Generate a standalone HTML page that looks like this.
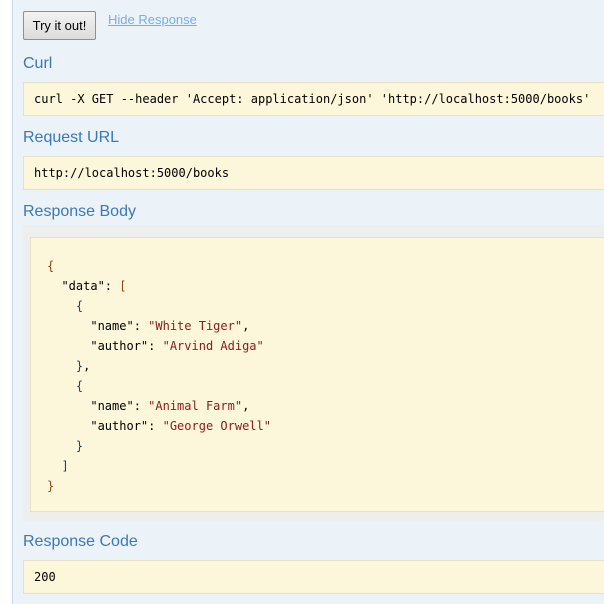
<!DOCTYPE html>
<html><head><meta charset="utf-8"><style>
html,body{margin:0;padding:0;width:604px;height:604px;overflow:hidden;background:#fff;font-family:"Liberation Sans",sans-serif}
.wrap{position:absolute;left:12px;top:0;width:592px;height:604px;background:#ebf3f9;border-left:1px solid #c5dbed}
.btn{position:absolute;left:10px;top:11px;width:73px;height:29px;box-sizing:border-box;border:1px solid #8f8f8f;border-radius:2px;background:linear-gradient(#f2f2f2,#dcdcdc);font-size:13px;line-height:27px;text-align:center;color:#000}
.hide{position:absolute;left:95px;top:12px;font-size:13px;color:#7aaee0;text-decoration:underline}
h4{position:absolute;left:10px;margin:0;font-weight:normal;font-size:16px;color:#3b78b6}
.box{position:absolute;left:10px;width:600px;box-sizing:border-box;background:#fcf6db;border:1px solid #e5e0c6;font-family:"DejaVu Sans Mono",monospace;font-size:12px;color:#000;padding-left:10px}
.outer{position:absolute;left:10px;top:225px;width:600px;height:296px;background:#eeeeee}
.inner{position:absolute;left:17px;top:237px;width:600px;height:275px;box-sizing:border-box;background:#fcf6db;border:1px solid #e5e0c6}
pre{position:absolute;left:34px;top:256px;margin:0;font-family:"DejaVu Sans Mono",monospace;font-size:12px;line-height:20px;color:#000}
.s{color:#8b1a1a}.b{color:#8a4b10}.c{color:#1e3f6b}
</style></head><body><div class="wrap">
<div class="btn">Try it out!</div>
<div class="hide">Hide Response</div>
<h4 style="top:55px">Curl</h4>
<div class="box" style="top:82px;height:34px;line-height:32px">curl -X GET --header 'Accept: application/json' 'http://localhost:5000/books'</div>
<h4 style="top:129px">Request URL</h4>
<div class="box" style="top:156px;height:34px;line-height:32px">http://localhost:5000/books</div>
<h4 style="top:203px">Response Body</h4>
<div class="outer"></div>
<div class="inner"></div>
<pre><span class="b">{</span>
  "data": <span class="b">[</span>
    <span class="c">{</span>
      "name": <span class="s">"White Tiger"</span>,
      "author": <span class="s">"Arvind Adiga"</span>
    <span class="c">}</span>,
    <span class="c">{</span>
      "name": <span class="s">"Animal Farm"</span>,
      "author": <span class="s">"George Orwell"</span>
    <span class="c">}</span>
  <span class="c">]</span>
<span class="b">}</span></pre>
<h4 style="top:533px">Response Code</h4>
<div class="box" style="top:560px;height:34px;line-height:32px">200</div>
</div></body></html>
